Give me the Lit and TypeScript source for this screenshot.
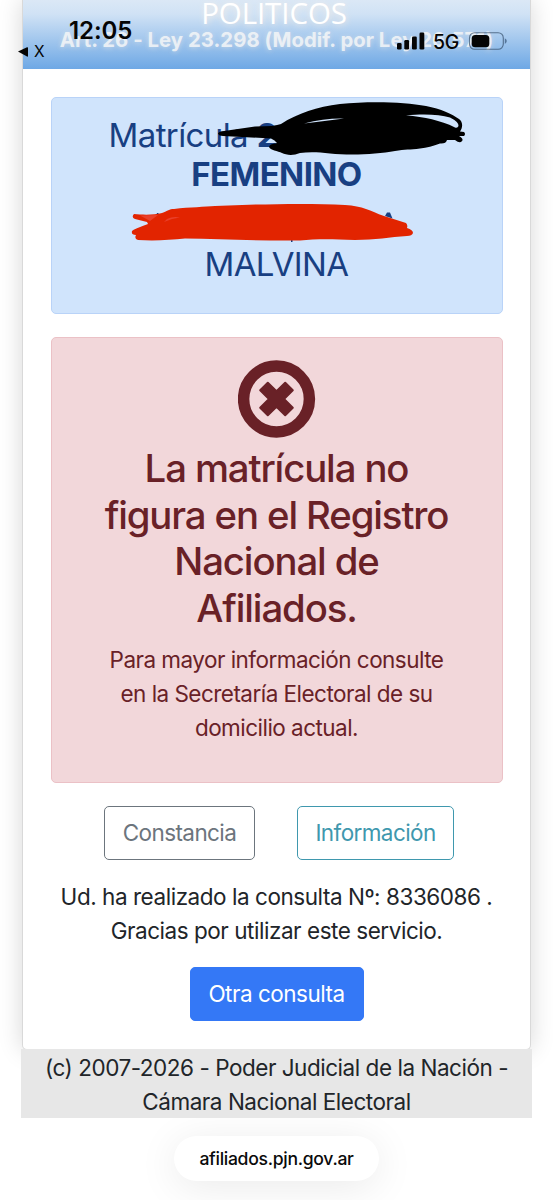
import { LitElement, html, css, svg } from "lit";
import { customElement } from "lit/decorators.js";

@customElement("status-bar")
class StatusBar extends LitElement {
  static styles = css`
    :host { position: absolute; inset: 0 0 auto 0; height: 69px; color: #050505; z-index: 3; }
    .time { position: absolute; left: 69px; top: 16px; font: 600 24px/30px Inter, sans-serif; letter-spacing: -0.1px; white-space: nowrap; }
    .back { position: absolute; left: 34px; top: 42px; font: 400 15.5px/20px Inter, sans-serif; }
    .net { position: absolute; left: 433px; top: 30px; font: 500 19.5px/24px Inter, sans-serif; letter-spacing: -0.4px; }
    svg { position: absolute; left: 0; top: 0; }
  `;
  render() {
    return html`
      <span class="time">12:05</span>
      <span class="back">X</span>
      <span class="net">5G</span>
      <svg width="553" height="69" viewBox="0 0 553 69" fill="#050505">
        <path d="M18 51.6 27 47.3Q28 47 28 48V56Q28 57 27 56.5Z" />
        <rect x="397" y="43" width="4.6" height="6.6" rx="1.3" />
        <rect x="404.3" y="40" width="4.8" height="9.6" rx="1.3" />
        <rect x="412" y="36.4" width="4.8" height="13.2" rx="1.3" />
        <rect x="419.5" y="32.6" width="4.8" height="17" rx="1.3" />
        <rect x="469.5" y="32.7" width="33.8" height="16.6" rx="5.2" fill="none" stroke="#38516e" stroke-opacity=".75" stroke-width="1.1" />
        <rect x="471.7" y="34.9" width="17.6" height="12.3" rx="3.5" />
        <path d="M504.8 38.3q2 1 2 2.8t-2 2.8z" fill="#54759a" />
      </svg>
    `;
  }
}

@customElement("app-root")
class AppRoot extends LitElement {
  static styles = css`
    :host { display: block; position: relative; width: 553px; height: 1200px; overflow: hidden; background: #fff; font: 400 22.5px/33.8px Inter, "Liberation Sans", sans-serif; color: #212529; text-align: center; }
    * { box-sizing: border-box; }
    .page { width: 509px; margin-left: 22px; }
    .card { height: 1050px; border: 1px solid #d9d9d9; border-top: 0; border-radius: 0 0 5px 5px; background: #fff; box-shadow: 0 0 24px rgba(0, 0, 0, .16); }
    .head { height: 69px; overflow: hidden; background: linear-gradient(#dbe8f6 0, #d0e2f5 14px, #6ea8e5 69px); color: #fff; white-space: nowrap; }
    .h1 { font: 400 29.5px/34px "Open Sans", "Noto Sans", sans-serif; margin-top: -4.5px; letter-spacing: -.1px; padding-right: 5px; text-shadow: 1px 1px 6px rgba(255, 240, 225, .8); }
    .h2 { font-weight: 700; font-size: 20.3px; line-height: 20px; letter-spacing: .05px; color: rgba(246, 247, 248, .84); text-shadow: 0 1px 5px rgba(255, 240, 225, .45); }
    .body { display: flex; flex-direction: column; align-items: center; padding-top: 28px; }
    .alert { width: 452px; border-radius: 5px; border: 1.4px solid; position: relative; }
    .info { height: 217px; background: #d0e4fc; border-color: #b9d3f8; color: #183f82; padding-top: 18px; font-size: 33px; line-height: 39px; letter-spacing: -.6px; white-space: nowrap; }
    .info .first { padding-left: 57px; text-align: left; }
    .info b { font-weight: 700; }
    .name { margin-top: 51px; }
    .marks { position: absolute; left: -52px; top: -98px; }
    .bad { margin-top: 23px; height: 446px; background: #f2d7da; border-color: #ebc1c6; color: #692127; padding-top: 22px; }
    .icon { display: block; margin: 0 auto; }
    .title { font-size: 38.3px; line-height: 46.6px; font-weight: 500; letter-spacing: -1.1px; margin-top: 7px; }
    .note { margin-top: 12px; letter-spacing: -.53px; }
    .row { display: flex; gap: 42px; margin: 23px 0 0 5px; }
    .btn { height: 53.5px; border: 1.4px solid; border-radius: 5px; display: grid; place-items: center; white-space: nowrap; letter-spacing: -.6px; }
    .gray { width: 151px; color: #6c757d; }
    .teal { width: 157px; color: #3f98ae; }
    .msg { margin-top: 20.5px; letter-spacing: -.46px; white-space: nowrap; }
    .blue { margin-top: 19.5px; width: 174px; padding-top: 1px; background: #3478f6; border-color: #3478f6; color: #fff; letter-spacing: -.5px; }
    .foot { height: 72px; margin: -4px 0 0 -1px; width: 511px; padding-top: 5px; letter-spacing: -.47px; white-space: nowrap; position: relative; z-index: 1;
      background: linear-gradient(#e7e7e7, #e7e7e7) 0 3px / 100% 69px no-repeat; }
    .dock { display: flex; justify-content: center; padding-top: 18px; }
    .url { width: 205px; height: 45px; border-radius: 23px; background: #fff; color: #0a0a0a; font-weight: 500; font-size: 17.6px; line-height: 45px; letter-spacing: -.3px; box-shadow: 0 6px 40px rgba(0, 0, 0, .085); }
  `;

  private marks() {
    return svg`
      <path d="M156.500 213h2v3M291 238v4h1.500v-4M385 216l2-3.500 3 0 2.500 6z" fill="#183f82" />
      <path fill="#000" d="M218 133.500Q219 131 224 131L255 126.500Q275 126.500 281 124C298 113 317 107 340 104C370 101 405 102 426 106C441 109 452 114 459 119C463 122 463 127 460 131.500L464 132Q466 134 464 136L459 136Q464 139 462 141Q460 144 455 140L447 140Q446 144 440 143.500C433 146 427 148 420 148.500C410 150 405 149 395 151C377 154.500 350 155.500 330 153.500C318 152 308 152 300 153C293 156 286 155 282 153C278 151 270 150 269 147Q269 144 277 143Q275 140 271 138.500L223 136Q219 136 218 133.500Z" />
      <path fill="#d0e4fc" d="M406 115.300C425 113.500 440 114.500 450 117.500Q459 122 458.500 126Q457.500 128.500 455 127.500C440 120 425 117.500 406 115.300Z" />
      <path fill="#d0e4fc" d="M304 123.500Q325 118 344 118.500Q325 121 304 123.500Z" />
      <path fill="#e22400" d="M134 214C143 215 155 215 162 213C168 211 169 209 174 209C190 207 205 207 215 206C260 204 310 203 345 205C363 206 370 211 384 216L406 223Q408 225 407 228Q413 230 413 233Q412 236 407 236C390 237 375 240 355 240C330 239 315 239 300 240.500C260 241 220 239 185 238.500C170 240 155 241 138 240Q134 239 136 235Q131 235 132 231Q134 229 148 224L147 222L135 219Q131 217 134 214Z" />
      <path fill="#e9402a" d="M140 215.500 158 215 150 221ZM167 219Q173 216 180 217.500Q172 218 164 222Z" />
    `;
  }

  render() {
    return html`
      <div class="page">
        <div class="card">
          <div class="head">
            <div class="h1">POLITICOS</div>
            <div class="h2">Art. 26 - Ley 23.298 (Modif. por Ley 26.571)</div>
          </div>
          <div class="body">
            <div class="alert info">
              <div class="first">Matrícula <b>2</b></div>
              <div><b>FEMENINO</b></div>
              <div class="name">MALVINA</div>
              <svg class="marks" width="553" height="320" viewBox="0 0 553 320">${this.marks()}</svg>
            </div>
            <div class="alert bad">
              <svg class="icon" width="78" height="78" viewBox="0 0 78 78">
                <circle cx="38.500" cy="39" r="32.900" fill="none" stroke="#692127" stroke-width="11.500" />
                <path transform="translate(-.5 0)" d="M30.300 22.700 39 31.300 47.700 22.700 55.300 30.300 46.500 39 55.300 47.700 47.700 55.300 39 46.700 30.300 55.300 22.700 47.700 31.500 39 22.700 30.300Z" fill="#692127" stroke="#692127" stroke-width="2" stroke-linejoin="round" />
              </svg>
              <div class="title">La matrícula no<br />figura en el Registro<br />Nacional de<br />Afiliados.</div>
              <div class="note">Para mayor información consulte<br />en la Secretaría Electoral de su<br />domicilio actual.</div>
            </div>
            <div class="row">
              <div class="btn gray">Constancia</div>
              <div class="btn teal">Información</div>
            </div>
            <div class="msg">Ud. ha realizado la consulta Nº: 8336086 .<br />Gracias por utilizar este servicio.</div>
            <div class="btn blue">Otra consulta</div>
          </div>
        </div>
        <div class="foot">(c) 2007-2026 - Poder Judicial de la Nación -<br />Cámara Nacional Electoral</div>
        <div class="dock"><div class="url">afiliados.pjn.gov.ar</div></div>
      </div>
      <status-bar></status-bar>
    `;
  }
}
